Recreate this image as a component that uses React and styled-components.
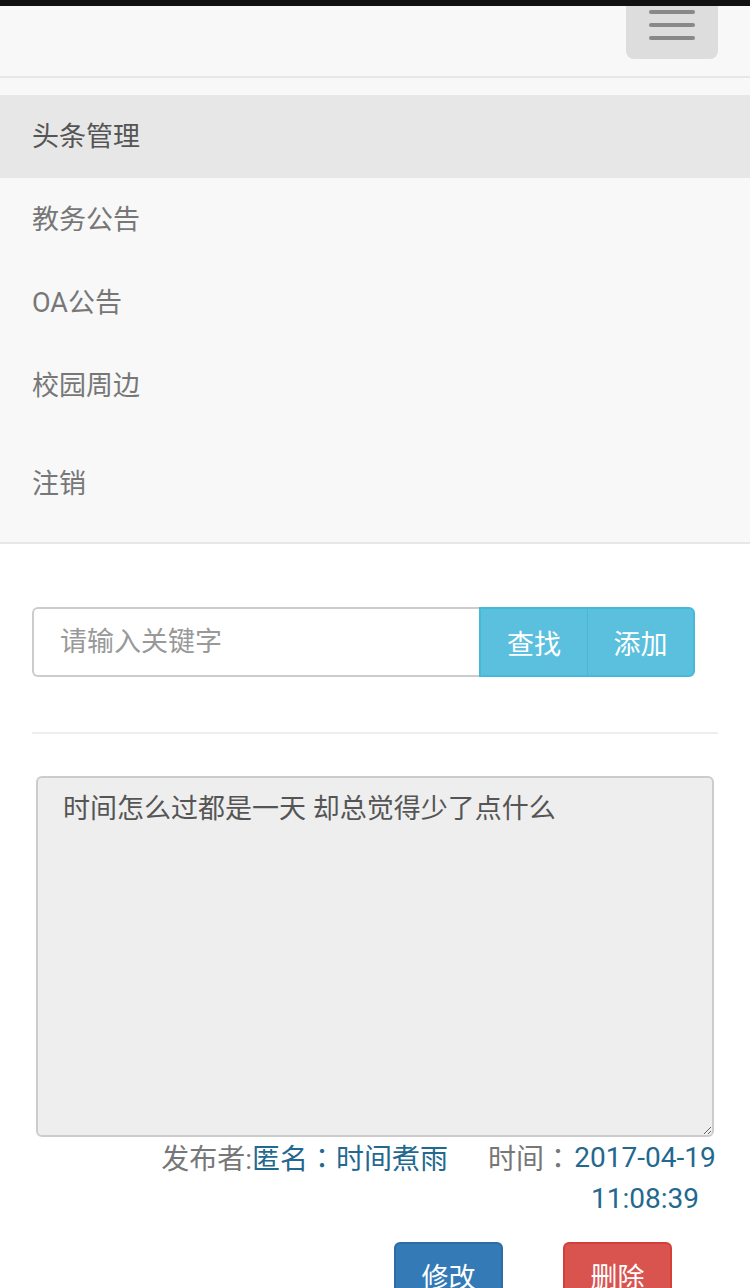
import styled, {createGlobalStyle} from 'styled-components'

const navItems = [
  {id: 'headline', text: '头条管理', active: true},
  {id: 'teaching', text: '教务公告'},
  {id: 'oa', text: 'OA公告'},
  {id: 'campus', text: '校园周边'},
]

const GlobalStyle = createGlobalStyle`
  body {
    margin: 0;
    background: #fff;
    font-family: Roboto, "Noto Sans CJK SC", sans-serif;
  }
  * { box-sizing: border-box; }
`

const App = () => (
  <Page>
    <GlobalStyle />
    <StatusBar />
    <Navbar>
      <NavHeader>
        <Toggle type="button" aria-label="menu">
          <Bar />
          <Bar />
          <Bar />
        </Toggle>
      </NavHeader>
      <NavList>
        {navItems.map(each => (
          <NavItem key={each.id} active={each.active}>
            {each.text}
          </NavItem>
        ))}
      </NavList>
      <NavList gap={15}>
        <NavItem>注销</NavItem>
      </NavList>
    </Navbar>

    <Main>
      <SearchGroup>
        <SearchInput placeholder="请输入关键字" />
        <InfoButton type="button">查找</InfoButton>
        <InfoButton type="button" last>
          添加
        </InfoButton>
      </SearchGroup>
      <Divider />
      <Content readOnly value="时间怎么过都是一天 却总觉得少了点什么" />
      <Meta>
        <Muted>发布者:</Muted>
        <Value>
          匿名<Colon>：</Colon>时间煮雨
        </Value>
        <Muted spaced>
          时间<Colon>：</Colon>
        </Muted>
        <DateValue>2017-04-19 11:08:39</DateValue>
      </Meta>
      <Actions>
        <ActionButton type="button" color="#337ab7" border="#2e6da4">
          修改
        </ActionButton>
        <ActionButton type="button" color="#d9534f" border="#d43f3a">
          删除
        </ActionButton>
      </Actions>
    </Main>
  </Page>
)

export default App

const Page = styled.div`
  width: 750px;
  min-height: 1288px;
  overflow: hidden;
`

const StatusBar = styled.div`
  height: 6px;
  background: #111;
`

const Navbar = styled.nav`
  background: #f8f8f8;
  border-bottom: 2px solid #e7e7e7;
  padding-bottom: 17px;
`

const NavHeader = styled.div`
  height: 72px;
  display: flex;
  justify-content: flex-end;
  align-items: flex-start;
  padding-right: 32px;
  border-bottom: 2px solid #e7e7e7;
`

const Toggle = styled.button`
  width: 92px;
  height: 53px;
  border: none;
  border-radius: 0 0 8px 8px;
  background: #ddd;
  padding: 4px 0 0;
  display: flex;
  flex-direction: column;
  align-items: center;
  gap: 9px;
`

const Bar = styled.span`
  display: block;
  width: 46px;
  height: 4px;
  border-radius: 2px;
  background: #888;
`

const NavList = styled.ul`
  list-style: none;
  margin: ${props => props.gap ?? 17}px 0 0;
  padding: 0;
`

const NavItem = styled.li`
  height: 83px;
  display: flex;
  align-items: center;
  padding: 0 0 5px 32px;
  font-size: 27px;
  color: ${props => (props.active ? '#555' : '#777')};
  background: ${props => (props.active ? '#e7e7e7' : 'transparent')};
`

const Main = styled.main`
  padding: 63px 32px 0;
`

const SearchGroup = styled.div`
  display: flex;
  width: 663px;
  height: 70px;
`

const SearchInput = styled.input`
  flex: 1;
  min-width: 0;
  height: 100%;
  border: 2px solid #ccc;
  border-right: none;
  border-radius: 6px 0 0 6px;
  padding: 0 26px;
  font-family: inherit;
  font-size: 27px;
  color: #555;
  outline: none;
  &::placeholder {
    color: #999;
  }
`

const InfoButton = styled.button`
  width: 108px;
  height: 100%;
  background: #5bc0de;
  border: 2px solid #46b8da;
  border-left: ${props => (props.last ? '1px solid #46b8da' : '2px solid #46b8da')};
  border-right: ${props => (props.last ? '2px solid #46b8da' : 'none')};
  border-radius: ${props => (props.last ? '0 6px 6px 0' : '0')};
  color: #fff;
  font-family: inherit;
  font-size: 27px;
`

const Divider = styled.hr`
  margin: 55px 0 42px;
  border: none;
  border-top: 2px solid #eee;
`

const Content = styled.textarea`
  display: block;
  width: 678px;
  height: 361px;
  margin: 0 4px;
  background: #eee;
  border: 2px solid #ccc;
  border-radius: 6px;
  padding: 12px 25px;
  font-family: inherit;
  font-size: 27px;
  line-height: 38px;
  color: #555;
  outline: none;
`

const Meta = styled.div`
  text-align: right;
  font-size: 28px;
  line-height: 41px;
`

const Muted = styled.span`
  color: #777;
  margin-left: ${props => (props.spaced ? '40px' : '0')};
`

const Value = styled.span`
  color: #23698f;
`

const Colon = styled.span`
  font-family: "Noto Sans CJK TC", sans-serif;
`

const DateValue = styled.span`
  display: inline-block;
  width: 146px;
  text-align: center;
  color: #23698f;
  vertical-align: top;
`

const Actions = styled.div`
  display: flex;
  justify-content: flex-end;
  gap: 60px;
  padding-right: 46px;
  margin-top: 23px;
`

const ActionButton = styled.button`
  width: 109px;
  height: 66px;
  background: ${props => props.color};
  border: 2px solid ${props => props.border};
  border-radius: 6px;
  color: #fff;
  font-family: inherit;
  font-size: 27px;
`
